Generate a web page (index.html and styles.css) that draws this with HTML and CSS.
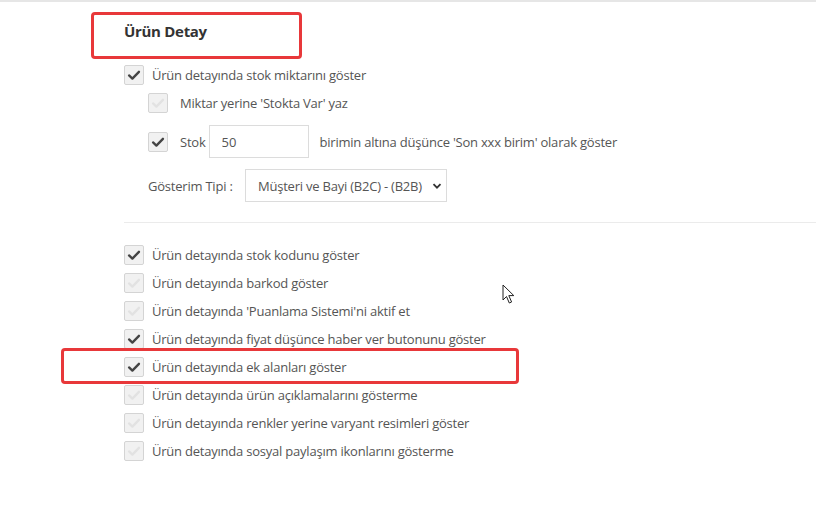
FILE: index.html
```html
<!DOCTYPE html>
<html lang="tr">
<head>
  <meta charset="UTF-8" />
  <title>Ürün Detay</title>
  <link rel="stylesheet" href="styles.css">
</head>
<body>
  <div class="page">
    <div class="section">
      <h3 class="baslik">Ürün Detay</h3>

      <label class="satir ilk">
        <span class="kutu secili"><svg viewBox="0 0 20 20"><path d="M4.5 10.5 L8.2 14 L15.5 6.5" /></svg></span>
        Ürün detayında stok miktarını göster
      </label>

      <div class="alt">
        <label class="satir">
          <span class="kutu"><svg viewBox="0 0 20 20"><path d="M4.5 10.5 L8.2 14 L15.5 6.5" /></svg></span>
          <span class="bosluk">Miktar yerine 'Stokta Var' yaz</span>
        </label>

        <div class="satir stok">
          <span class="kutu secili"><svg viewBox="0 0 20 20"><path d="M4.5 10.5 L8.2 14 L15.5 6.5" /></svg></span>
          <span class="bosluk">Stok</span>
          <input type="text" class="adet" value="50">
          <span>birimin altına düşünce 'Son xxx birim' olarak göster</span>
        </div>

        <div class="satir tip">
          <span class="tip-etiket">Gösterim Tipi :</span>
          <div class="secim">
            <span>Müşteri ve Bayi (B2C) - (B2B)</span>
            <svg class="ok" viewBox="0 0 10 10"><path d="M1.5 3.2 L5 6.7 L8.5 3.2" /></svg>
          </div>
        </div>
      </div>

      <hr class="ayrac">

      <div class="liste">
        <label class="satir"><span class="kutu secili"><svg viewBox="0 0 20 20"><path d="M4.5 10.5 L8.2 14 L15.5 6.5" /></svg></span>Ürün detayında stok kodunu göster</label>
        <label class="satir"><span class="kutu"><svg viewBox="0 0 20 20"><path d="M4.5 10.5 L8.2 14 L15.5 6.5" /></svg></span>Ürün detayında barkod göster</label>
        <label class="satir"><span class="kutu"><svg viewBox="0 0 20 20"><path d="M4.5 10.5 L8.2 14 L15.5 6.5" /></svg></span>Ürün detayında 'Puanlama Sistemi'ni aktif et</label>
        <label class="satir"><span class="kutu secili"><svg viewBox="0 0 20 20"><path d="M4.5 10.5 L8.2 14 L15.5 6.5" /></svg></span>Ürün detayında fiyat düşünce haber ver butonunu göster</label>
        <label class="satir"><span class="kutu secili"><svg viewBox="0 0 20 20"><path d="M4.5 10.5 L8.2 14 L15.5 6.5" /></svg></span>Ürün detayında ek alanları göster</label>
        <label class="satir"><span class="kutu"><svg viewBox="0 0 20 20"><path d="M4.5 10.5 L8.2 14 L15.5 6.5" /></svg></span>Ürün detayında ürün açıklamalarını gösterme</label>
        <label class="satir"><span class="kutu"><svg viewBox="0 0 20 20"><path d="M4.5 10.5 L8.2 14 L15.5 6.5" /></svg></span>Ürün detayında renkler yerine varyant resimleri göster</label>
        <label class="satir"><span class="kutu"><svg viewBox="0 0 20 20"><path d="M4.5 10.5 L8.2 14 L15.5 6.5" /></svg></span>Ürün detayında sosyal paylaşım ikonlarını gösterme</label>
      </div>
    </div>

    <!-- isaretler -->
    <div class="isaret isaret-baslik"></div>
    <div class="isaret isaret-satir"></div>

    <svg class="imlec" viewBox="0 0 14 22"><path d="M1 1 L1 16 L4.5 12.5 L7.3 19 L9.6 18 L6.8 11.6 L11.8 11.6 Z" /></svg>
  </div>
</body>
</html>
```

FILE: styles.css
```css
body {
  margin: 0;
  font-family: 'Open Sans', 'Liberation Sans', sans-serif;
  font-size: 13px;
  letter-spacing: -0.22px;
  color: #555;
  background: white;
}

.page {
  position: relative;
  width: 816px;
  height: 505px;
  border-top: 2px solid #e6e6e6;
  box-sizing: border-box;
  overflow: hidden;
}

.section {
  padding-left: 124px;
}

.baslik {
  margin: 17px 0 0 0;
  height: 24px;
  line-height: 24px;
  font-size: 15px;
  letter-spacing: -0.3px;
  font-weight: 700;
  color: #333;
}

.satir {
  display: flex;
  align-items: center;
  height: 28px;
  white-space: nowrap;
}

.ilk {
  margin-top: 18px;
}

.kutu {
  width: 20px;
  height: 20px;
  box-sizing: border-box;
  border: 1px solid #d4d4d4;
  background: #f1f1f1;
  border-radius: 2px;
  margin-right: 8px;
  flex: none;
  display: flex;
}

.kutu svg {
  width: 18px;
  height: 18px;
}

.kutu path {
  fill: none;
  stroke: #e2e2e2;
  stroke-width: 2.6;
  stroke-linecap: round;
  stroke-linejoin: round;
}

.kutu.secili path {
  stroke: #444;
}

.alt {
  padding-left: 24px;
}

.bosluk {
  margin-left: 4px;
}

.stok {
  height: 33px;
  margin-top: 8px;
}

.adet {
  width: 100px;
  height: 33px;
  box-sizing: border-box;
  border: 1px solid #dcdcdc;
  padding: 0 12px;
  margin: 0 11px 0 3px;
  font-family: inherit;
  font-size: 13px;
  color: #555;
  outline: none;
}

.tip {
  height: 33px;
  margin-top: 11px;
}

.tip-etiket {
  width: 97px;
}

.secim {
  width: 202px;
  height: 33px;
  box-sizing: border-box;
  border: 1px solid #dcdcdc;
  display: flex;
  align-items: center;
  justify-content: space-between;
  padding: 0 4px 0 12px;
}

.ok {
  width: 10px;
  height: 10px;
}

.ok path {
  fill: none;
  stroke: #333;
  stroke-width: 1.8;
}

.ayrac {
  border: 0;
  border-top: 1px solid #ebebeb;
  margin: 20px 0 18px 0;
}

.isaret {
  position: absolute;
  border: 3px solid #e8383a;
  border-radius: 4px;
}

.isaret-baslik {
  left: 91px;
  top: 10px;
  width: 205px;
  height: 41px;
}

.isaret-satir {
  left: 61px;
  top: 346px;
  width: 452px;
  height: 30px;
}

.imlec {
  position: absolute;
  left: 502px;
  top: 282px;
  width: 14px;
  height: 22px;
}

.imlec path {
  fill: white;
  stroke: #222;
  stroke-width: 1;
}
```
